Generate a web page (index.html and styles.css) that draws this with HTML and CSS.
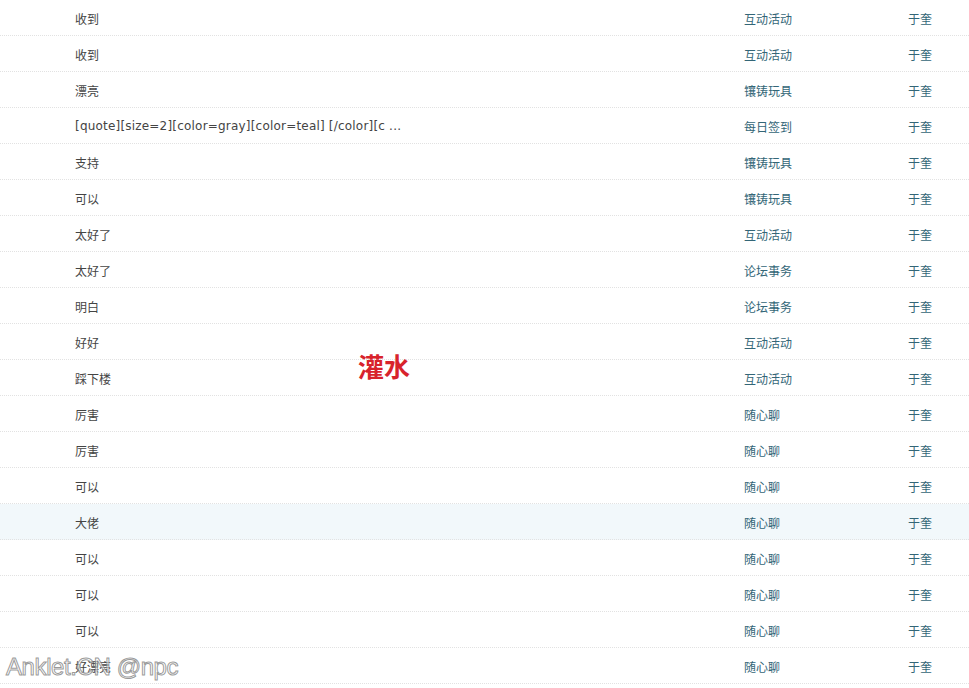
FILE: index.html
```html
<!DOCTYPE html>
<html lang="zh">
<head>
<meta charset="utf-8">
<link rel="stylesheet" href="styles.css">
</head>
<body>
<div class="list">
  <div class="row"><div class="subj">收到</div><a class="forum">互动活动</a><a class="author">于奎</a></div>
  <div class="row"><div class="subj">收到</div><a class="forum">互动活动</a><a class="author">于奎</a></div>
  <div class="row"><div class="subj">漂亮</div><a class="forum">镶铸玩具</a><a class="author">于奎</a></div>
  <div class="row"><div class="subj latin">[quote][size=2][color=gray][color=teal] [/color][c ...</div><a class="forum">每日签到</a><a class="author">于奎</a></div>
  <div class="row"><div class="subj">支持</div><a class="forum">镶铸玩具</a><a class="author">于奎</a></div>
  <div class="row"><div class="subj">可以</div><a class="forum">镶铸玩具</a><a class="author">于奎</a></div>
  <div class="row"><div class="subj">太好了</div><a class="forum">互动活动</a><a class="author">于奎</a></div>
  <div class="row"><div class="subj">太好了</div><a class="forum">论坛事务</a><a class="author">于奎</a></div>
  <div class="row"><div class="subj">明白</div><a class="forum">论坛事务</a><a class="author">于奎</a></div>
  <div class="row"><div class="subj">好好</div><a class="forum">互动活动</a><a class="author">于奎</a></div>
  <div class="row"><div class="subj">踩下楼</div><a class="forum">互动活动</a><a class="author">于奎</a></div>
  <div class="row"><div class="subj">厉害</div><a class="forum">随心聊</a><a class="author">于奎</a></div>
  <div class="row"><div class="subj">厉害</div><a class="forum">随心聊</a><a class="author">于奎</a></div>
  <div class="row"><div class="subj">可以</div><a class="forum">随心聊</a><a class="author">于奎</a></div>
  <div class="row hover"><div class="subj">大佬</div><a class="forum">随心聊</a><a class="author">于奎</a></div>
  <div class="row"><div class="subj">可以</div><a class="forum">随心聊</a><a class="author">于奎</a></div>
  <div class="row"><div class="subj">可以</div><a class="forum">随心聊</a><a class="author">于奎</a></div>
  <div class="row"><div class="subj">可以</div><a class="forum">随心聊</a><a class="author">于奎</a></div>
  <div class="row"><div class="subj">好漂亮</div><a class="forum">随心聊</a><a class="author">于奎</a></div>
</div>
<div class="stamp">灌水</div>
<div class="watermark">Anklet.CN @npc</div>
</body>
</html>
```

FILE: styles.css
```css
html, body {
  margin: 0;
  padding: 0;
  background: #fff;
  overflow: hidden;
}
body {
  font-family: "DejaVu Sans", "Noto Sans CJK SC", sans-serif;
  font-size: 12px;
  color: #444;
  position: relative;
  width: 969px;
  height: 688px;
}
.list {
  border-top: 1px dotted #e4e4e4;
  margin-top: -1px;
}
.row {
  display: grid;
  grid-template-columns: 744px 164px 1fr;
  box-sizing: border-box;
  height: 36px;
  padding-top: 1px;
  align-items: center;
  border-bottom: 1px dotted #e2e2e2;
}
.row.hover {
  background: #f2f8fb;
}
.subj {
  padding-left: 75px;
  color: #444;
  white-space: nowrap;
}
.subj.latin {
  letter-spacing: 0.2px;
}
.forum, .author {
  color: #336677;
  text-decoration: none;
}
.stamp {
  position: absolute;
  left: 358px;
  top: 350px;
  font-family: "Noto Sans CJK SC", sans-serif;
  font-weight: 700;
  font-size: 26px;
  line-height: 32px;
  color: #d8232c;
}
.watermark {
  position: absolute;
  left: 6px;
  top: 651px;
  font-family: "Liberation Sans", sans-serif;
  font-size: 24px;
  line-height: 32px;
  color: rgba(255, 255, 255, 0.6);
  -webkit-text-stroke: 1px rgba(120, 120, 120, 0.75);
  letter-spacing: -0.4px;
}
```
